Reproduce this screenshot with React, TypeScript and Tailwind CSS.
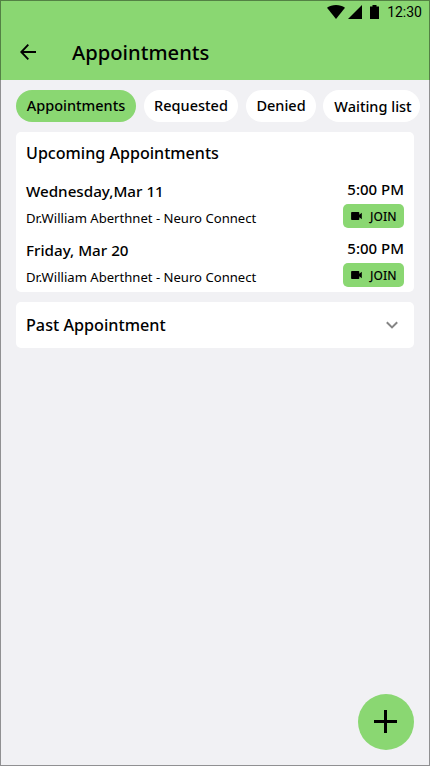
import clsx from 'clsx';

const tabs = [
  { label: 'Appointments', className: 'w-[120px] bg-[#8ad772]' },
  { label: 'Requested', className: 'w-[94px] bg-white' },
  { label: 'Denied', className: 'w-[70px] bg-white' },
  { label: 'Waiting list', className: '-ml-px w-[97px] bg-white pl-[3px] pt-px' },
];

const appointments = [
  { date: 'Wednesday,Mar 11', time: '5:00 PM', doctor: 'Dr.William Aberthnet - Neuro Connect' },
  { date: 'Friday, Mar 20', time: '5:00 PM', doctor: 'Dr.William Aberthnet - Neuro Connect' },
];

function StatusBar() {
  return (
    <div className="flex h-6 items-center justify-end pr-2">
      <svg className="h-[14px] w-[18px]" viewBox="0 0 18 14">
        <path d="M9 14 0 2.8C2.5 1 5.6 0 9 0s6.5 1 9 2.8Z" />
      </svg>
      <svg className="ml-[3px] h-[14px] w-[14px]" viewBox="0 0 14 14">
        <path d="M14 0v14H0Z" />
      </svg>
      <svg className="ml-2 h-[14px] w-[9px]" viewBox="0 0 9 14">
        <path d="M2.5 0h4v1.4H9V14H0V1.4h2.5Z" />
      </svg>
      <span className="ml-2 font-['Roboto',sans-serif] text-[14px] leading-none">12:30</span>
    </div>
  );
}

function JoinButton() {
  return (
    <button className="flex h-6 w-[61px] shrink-0 items-center rounded-[5px] bg-[#8ad772] pl-2 text-[12px] font-medium">
      <svg className="h-2 w-[11px]" viewBox="0 0 11 8">
        <path d="M1 0h6.5q.8 0 .8.8v2L10.8.7v6.6L8.300 5.200v2q0 .8-.8.8H1q-.9 0-.9-.8V.8Q.1 0 1 0Z" />
      </svg>
      <span className="ml-2 pt-px leading-[18px]">JOIN</span>
    </button>
  );
}

export default function App() {
  return (
    <div className="relative flex h-[766px] w-[430px] flex-col overflow-hidden bg-[#f1f1f4] font-['Noto_Sans',sans-serif] text-black">
      <header className="h-20 bg-[#8ad772]">
        <StatusBar />
        <div className="flex h-14 items-center pl-5">
          <svg className="h-4 w-4" viewBox="0 0 16 16" fill="none" stroke="currentColor" strokeWidth="1.9">
            <path d="M16 8H1.5M8.300.7 1.3 8l7 7.3" />
          </svg>
          <h1 className="ml-9 text-[20.2px] font-medium leading-6">Appointments</h1>
        </div>
      </header>

      <nav className="flex gap-2 px-4 pt-[10px]">
        {tabs.map((tab) => (
          <button
            key={tab.label}
            className={clsx('h-8 shrink-0 whitespace-nowrap rounded-full text-center text-[14.5px] font-medium', tab.className)}
          >
            {tab.label}
          </button>
        ))}
      </nav>

      <main className="flex flex-col gap-[10px] px-4 pt-[10px]">
        <section className="h-40 rounded-[5px] bg-white px-[10px] pt-[9px]">
          <h2 className="text-[16.1px] font-medium leading-6">Upcoming Appointments</h2>
          <div className="mt-[14px] flex flex-col gap-[10px]">
            {appointments.map((item) => (
              <div key={item.date} className="flex h-[49px] justify-between">
                <div>
                  <p className="pt-0.5 text-[15.2px] font-medium leading-5">{item.date}</p>
                  <p className="mt-[7px] text-[13.1px] leading-5">{item.doctor}</p>
                </div>
                <div className="flex flex-col items-end">
                  <p className="mb-[5px] text-[15px] font-medium leading-5">{item.time}</p>
                  <JoinButton />
                </div>
              </div>
            ))}
          </div>
        </section>

        <section className="flex h-[46px] items-center justify-between rounded-[5px] bg-white pl-[10px] pr-4">
          <h2 className="text-[16.2px] font-medium leading-6">Past Appointment</h2>
          <svg className="h-[8px] w-3" viewBox="0 0 12 8" fill="none" stroke="#858585" strokeWidth="2">
            <path d="m.8 1.2 5.200 5.200 5.200-5.200" />
          </svg>
        </section>
      </main>

      <button className="absolute bottom-4 right-4 flex size-14 items-center justify-center rounded-full bg-[#8ad772]">
        <svg className="size-6" viewBox="0 0 24 24" stroke="currentColor" strokeWidth="3">
          <path d="M11.5 0v23M0 11.5h23" />
        </svg>
      </button>

      <div className="pointer-events-none absolute inset-0 border border-black/40" />
    </div>
  );
}
